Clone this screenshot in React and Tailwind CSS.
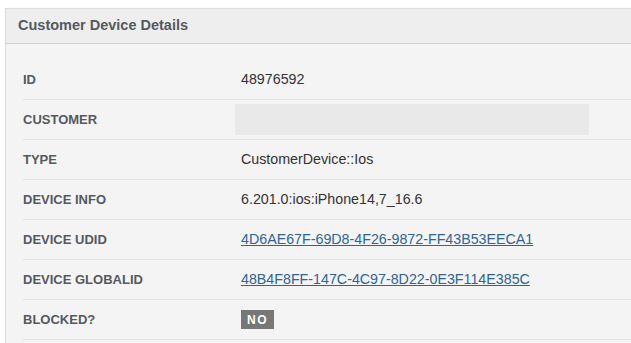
const rows = [
  { label: 'ID', value: '48976592' },
  { label: 'Customer', blank: true },
  { label: 'Type', value: 'CustomerDevice::Ios' },
  { label: 'Device Info', value: '6.201.0:ios:iPhone14,7_16.6' },
  { label: 'Device UDID', value: '4D6AE67F-69D8-4F26-9872-FF43B53EECA1', link: true },
  { label: 'Device GlobalID', value: '48B4F8FF-147C-4C97-8D22-0E3F114E385C', link: true },
  { label: 'Blocked?', badge: 'NO' },
];

export default function App() {
  return (
    <div className="min-h-screen bg-white pt-[8px] pl-[5px] font-['Helvetica','Liberation_Sans',Arial,sans-serif]">
      <div className="border-l border-t border-[#dcdcdc] shadow-[0_0_1px_rgba(0,0,0,0.1)]">
        <div className="h-[35px] bg-[#eeeeee] border-b border-[#cfcfcf] flex items-center pl-[12px]">
          <h2 className="text-[14.5px] font-bold text-[#555a60]">Customer Device Details</h2>
        </div>
        <div className="bg-[#f4f4f4] pt-[16px] pl-[17px] pb-[4px]">
          {rows.map((row) => (
            <div key={row.label} className="flex items-center h-[40px] border-b border-[#e2e2e2]">
              <div className="w-[218px] text-[13px] font-bold uppercase text-[#55595e]">{row.label}</div>
              {row.blank && <div className="-ml-[6px] w-[354px] h-[31px] bg-[#e9e9e9]" />}
              {row.value && !row.link && <div className="text-[14.25px] text-[#333]">{row.value}</div>}
              {row.link && (
                <a href="#" className="text-[14.25px] text-[#2f6493] underline">{row.value}</a>
              )}
              {row.badge && (
                <span className="w-[33px] h-[19px] bg-[#777] text-white text-[12px] font-bold tracking-[1.5px] flex items-center justify-center">
                  {row.badge}
                </span>
              )}
            </div>
          ))}
        </div>
      </div>
    </div>
  );
}
